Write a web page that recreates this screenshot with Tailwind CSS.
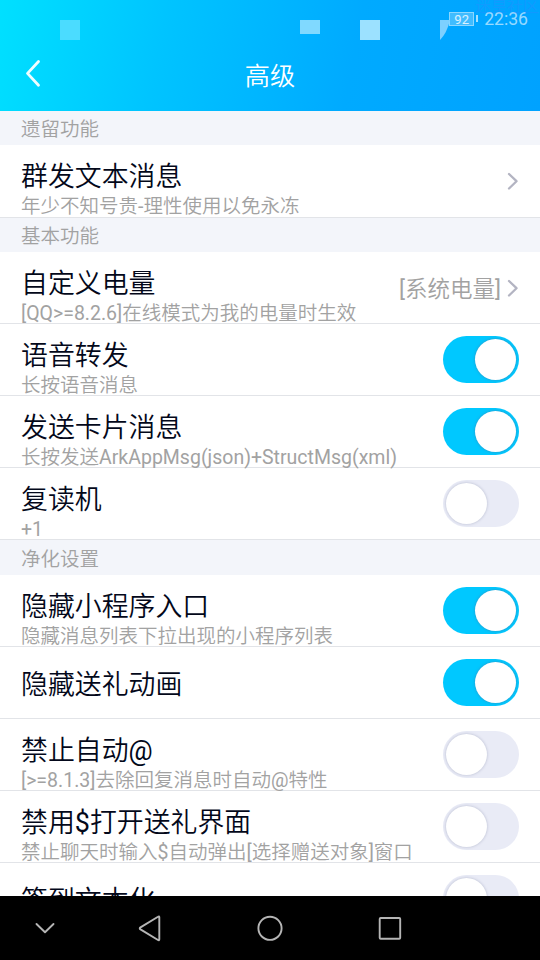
<!DOCTYPE html>
<html lang="zh-CN">
<head>
<meta charset="utf-8">
<title>高级</title>
<script src="https://cdn.jsdelivr.net/npm/@tailwindcss/browser@4"></script>
</head>
<body class="w-[540px] h-[960px] overflow-hidden bg-white flex flex-col font-['Roboto','Noto_Sans_CJK_SC',sans-serif]">
<header class="relative shrink-0 h-[111px] overflow-hidden flex flex-col bg-[linear-gradient(101deg,#00e0ff_0%,#00c4ff_30%,#00aaff_65%,#00a2ff_100%)]">
  <div class="h-[37px] shrink-0 flex items-center justify-end pr-[12px] gap-[6px] text-white/60">
    <div class="flex items-center gap-[2px]">
      <div class="w-[25px] h-[14px] border border-white/40 bg-white/25 text-[13px] leading-[13px] text-white/80 text-center">92</div>
      <div class="w-[2px] h-[7px] bg-white/65"></div>
    </div>
    <span class="text-[17.6px] leading-[20px]">22:36</span>
  </div>
  <div class="flex-1 grid grid-cols-[100px_1fr_100px] items-center">
    <svg class="w-[20px] h-[30px] ml-[23px]" viewBox="0 0 20 30" fill="none" stroke="#f0fdff" stroke-width="2.8" stroke-linecap="round" stroke-linejoin="round"><path d="M15.5 2.5 4.5 14.4 15.5 26.3"/></svg>
    <h1 class="text-center text-[25.2px] leading-[30px] pt-[5px] text-white font-[350]">高级</h1>
  </div>
  <div class="absolute left-[60px] top-[20px] w-[20px] h-[20px] bg-[#4bdcff]"></div>
  <div class="absolute left-[300px] top-[20px] w-[20px] h-[14px] bg-[#80d9ff]"></div>
  <div class="absolute left-[360px] top-[20px] w-[20px] h-[20px] bg-[#9ce1ff]"></div>
  <svg class="absolute left-[440px] top-[20px] w-[10px] h-[20px]" viewBox="0 0 10 20"><path d="M0 0H10Q7 13 0 20Z" fill="#7dd0ff"/></svg>
  <div class="absolute left-[475px] top-[-3px] text-[16px] leading-[20px] whitespace-nowrap text-[#5a70ff]/20">迷皇社区</div>
</header>
<main class="h-[785px] shrink-0 overflow-hidden text-[#03081a]" id="list"></main>
<nav class="h-[64px] shrink-0 bg-black">
  <svg class="w-[540px] h-[64px]" viewBox="0 0 540 64" fill="none" stroke="#b5b5b5" stroke-width="1.9" stroke-linecap="round" stroke-linejoin="round">
    <path d="M36.5 28 45 36.3 53.5 28"/>
    <path d="M159.3 21.3V43.2Q159.3 44.8 158 44L140.5 33.4Q139 32.4 140.5 31.4L158 20.7Q159.3 19.8 159.3 21.3Z"/>
    <circle cx="270" cy="32.3" r="11.6"/>
    <rect x="379.7" y="22" width="20.5" height="20.7" rx="1"/>
  </svg>
</nav>
<script>
const items = [
  {section:'遗留功能', h:34},
  {t:'群发文本消息', s:'年少不知号贵-理性使用以免永冻', link:'', h:73},
  {section:'基本功能', h:34},
  {t:'自定义电量', s:'[QQ>=8.2.6]在线模式为我的电量时生效', link:'[系统电量]', h:72},
  {t:'语音转发', s:'长按语音消息', on:true, h:72},
  {t:'发送卡片消息', s:'长按发送ArkAppMsg(json)+StructMsg(xml)', on:true, h:72},
  {t:'复读机', s:'+1', on:false, h:72},
  {section:'净化设置', h:35},
  {t:'隐藏小程序入口', s:'隐藏消息列表下拉出现的小程序列表', on:true, h:72},
  {t:'隐藏送礼动画', on:true, h:72},
  {t:'禁止自动@', s:'[>=8.1.3]去除回复消息时自动@特性', on:false, h:72},
  {t:'禁用$打开送礼界面', s:'禁止聊天时输入$自动弹出[选择赠送对象]窗口', on:false, h:72},
  {t:'签到文本化', on:false, h:72}
];
// Latin runs use the regular weight next to the lighter Chinese text
const mix = s => s.replace(/[\x21-\x7e]+/g, m => '<span class="font-normal">' + m.replace(/>/g, '&gt;') + '</span>');
const chevron = '<svg class="w-[12px] h-[18px] shrink-0" viewBox="0 0 12 18" fill="none" stroke="#b3b4c2" stroke-width="2.3" stroke-linecap="round" stroke-linejoin="round"><path d="M2 2 9.5 9.2 2 16.5"/></svg>';
const toggle = on => on
  ? '<div class="w-[76.5px] h-[47px] shrink-0 rounded-full bg-[#00c8ff] p-[3px] flex items-center justify-end"><div class="size-[41px] rounded-full bg-white shadow-[0_0_3px_rgba(80,110,150,0.6)]"></div></div>'
  : '<div class="w-[76.5px] h-[47px] shrink-0 rounded-full bg-[#e9ebf6] p-[3px] flex items-center justify-start"><div class="size-[41px] rounded-full bg-white shadow-[0_0_3px_rgba(80,90,130,0.35)]"></div></div>';
document.getElementById('list').innerHTML = items.map(i => {
  if (i.section) return `<div class="bg-[#f3f5fa] px-[21px] pt-[4px] flex items-center text-[19.5px] leading-[28px] text-[#a2a2a2] font-[350]" style="height:${i.h}px">${i.section}</div>`;
  const right = 'link' in i
    ? `<div class="flex items-center gap-[6px] text-[22.5px] leading-[30px] text-[#a2a2a2] font-[350]"><span class="pt-[3px]">${mix(i.link)}</span>${chevron}</div>`
    : toggle(i.on);
  const text = 's' in i
    ? `<div class="self-start pt-[12px] whitespace-nowrap"><div class="text-[26.9px] leading-[40px]">${mix(i.t)}</div><div class="-mt-px text-[19.5px] leading-[22px] text-[#a2a2a2]">${mix(i.s)}</div></div>`
    : `<div class="text-[26.9px] leading-[40px] pt-[5px]">${i.t}</div>`;
  return `<div class="box-border border-b border-[#e2e4e8] pl-[21px] pr-[21px] flex items-center justify-between bg-white font-[350]" style="height:${i.h}px">${text}${right}</div>`;
}).join('');
</script>
</body>
</html>
